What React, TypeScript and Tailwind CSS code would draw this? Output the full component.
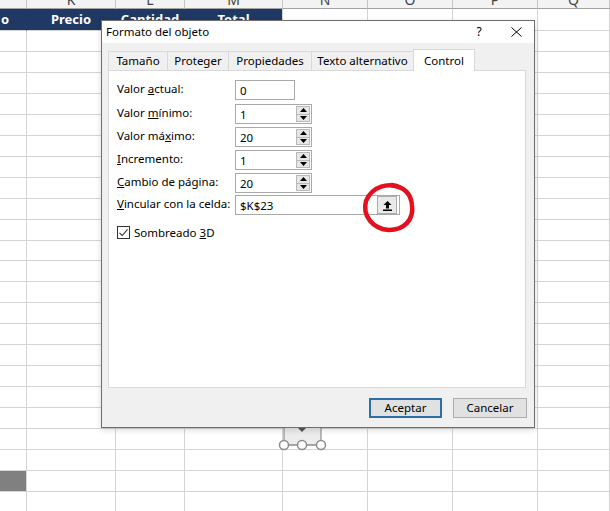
import React from 'react'

const COLS = 'grid grid-cols-[27px_89px_69px_98px_85px_85px_85px_72px]'
const letters = ['', 'K', 'L', 'M', 'N', 'O', 'P', 'Q']
const heads = ['o', 'Precio', 'Cantidad', 'Total']

function Sheet() {
  const rows = Array.from({ length: 23 }, (_, i) => i)
  return (
    <div className="font-['Noto_Sans',sans-serif]">
      {/* column letters */}
      <div className={COLS + ' bg-[#f3f3f3]'}>
        {letters.map((l, i) => (
          <div
            key={i}
            className="h-[9px] border-r border-b border-r-[#c6c6c6] border-b-[#a3a3a3] flex items-end justify-center overflow-hidden"
          >
            <span className="text-[14px] leading-[14px] text-[#444] mb-[1px]">{l}</span>
          </div>
        ))}
      </div>

      {/* table header row */}
      <div className={COLS}>
        {letters.map((_, i) =>
          i < 4 ? (
            <div
              key={i}
              className={
                'h-[22px] bg-[#203864] border-b border-b-[#d4d4d4] flex items-center overflow-hidden text-white font-bold text-[13px] ' +
                (i === 0 ? 'justify-start pl-[1px] border-r border-r-[#203864]' : 'justify-center') +
                (i === 1 || i === 2 ? ' border-r border-r-[#203864]' : '') +
                (i === 3 ? ' border-r border-r-[#d4d4d4]' : '')
              }
            >
              {heads[i]}
            </div>
          ) : (
            <div key={i} className="h-[22px] border-r border-b border-[#d4d4d4]" />
          ),
        )}
      </div>

      {/* cells */}
      {rows.map((r) => (
        <div key={r} className={COLS}>
          {letters.map((_, c) => (
            <div
              key={c}
              className={
                (r === 10 ? 'h-[20px] ' : 'h-[21px] ') +
                'border-r border-b border-[#d4d4d4] ' +
                (r === 21 && c === 0 ? 'bg-[#808080]' : 'bg-white')
              }
            />
          ))}
        </div>
      ))}
    </div>
  )
}

function SpinArrows() {
  return (
    <div className="ml-auto mr-[1px] w-[14px] h-full flex flex-col py-[1px]">
      <div className="flex-1 bg-[#e6e6e6] border border-[#b9b9b9] flex items-center justify-center">
        <svg width="7" height="4" viewBox="0 0 7 4">
          <polygon points="0,4 3.5,0 7,4" fill="#000" />
        </svg>
      </div>
      <div className="flex-1 bg-[#e6e6e6] border border-t-0 border-[#b9b9b9] flex items-center justify-center">
        <svg width="7" height="4" viewBox="0 0 7 4">
          <polygon points="0,0 7,0 3.5,4" fill="#000" />
        </svg>
      </div>
    </div>
  )
}

const fields = [
  { label: <>Valor <u>a</u>ctual:</>, value: '0', spin: false, mt: 'mt-0' },
  { label: <>Valor <u>m</u>ínimo:</>, value: '1', spin: true, mt: 'mt-[4px]' },
  { label: <>Valor má<u>x</u>imo:</>, value: '20', spin: true, mt: 'mt-[3px]' },
  { label: <><u>I</u>ncremento:</>, value: '1', spin: true, mt: 'mt-[3px]' },
  { label: <><u>C</u>ambio de página:</>, value: '20', spin: true, mt: 'mt-[3px]' },
]

function Dialog() {
  const tabs = [
    { name: 'Tamaño', w: 'w-[59px]' },
    { name: 'Proteger', w: 'w-[61px]' },
    { name: 'Propiedades', w: 'w-[83px]' },
    { name: 'Texto alternativo', w: 'w-[102px]' },
  ]
  return (
    <div className="absolute left-[101px] top-[20px] w-[434px] h-[408px] border border-[#6f6f6f] bg-[#f0f0f0] flex flex-col text-[11.5px] text-black font-['Noto_Sans',sans-serif] shadow-[0_2px_6px_rgba(0,0,0,0.15)]">
      {/* title bar */}
      <div className="h-[22px] bg-white flex items-center pl-[4px] shrink-0">
        <span>Formato del objeto</span>
        <span className="ml-auto w-[20px] text-center text-[12px]">?</span>
        <span className="ml-[17px] w-[20px] flex justify-center">
          <svg width="11" height="10" viewBox="0 0 11 10">
            <path d="M0.5 0.5 L10.5 9.5 M10.5 0.5 L0.5 9.5" stroke="#000" strokeWidth="1" />
          </svg>
        </span>
        <span className="w-[8px]" />
      </div>

      <div className="px-[6px] pt-[6px]">
        {/* tabs */}
        <div className="flex items-end h-[21px]">
          {tabs.map((t) => (
            <div
              key={t.name}
              className={t.w + ' h-[19px] border-t border-l border-[#d9d9d9] flex items-center justify-center'}
            >
              {t.name}
            </div>
          ))}
          <div className="w-[62px] h-[22px] mb-[-1px] relative z-10 bg-white border-t border-l border-r border-[#d9d9d9] flex items-center justify-center pt-[1px]">
            Control
          </div>
        </div>

        {/* panel */}
        <div className="w-[418px] h-[318px] border border-[#d9d9d9] bg-white pl-[8px] pt-[9px] flex flex-col">
          {fields.map((f, i) => (
            <div key={i} className={f.mt + ' flex items-center h-[20px]'}>
              <div className="w-[118px] pb-[3px]">{f.label}</div>
              <div
                className={
                  (f.spin ? 'w-[77px]' : 'w-[60px]') +
                  ' h-[20px] border border-[#a9a9a9] bg-white flex items-center pl-[4px]'
                }
              >
                <span className="pt-[1px]">{f.value}</span>
                {f.spin && <SpinArrows />}
              </div>
            </div>
          ))}

          <div className="mt-[2px] flex items-center h-[20px]">
            <div className="w-[118px] pb-[3px]">
              <u>V</u>incular con la celda:
            </div>
            <div className="w-[165px] h-[20px] border border-[#a9a9a9] bg-white flex items-center pl-[4px]">
              <span className="pt-[1px]">$K$23</span>
              <div className="ml-auto mr-[2px] w-[20px] h-[18px] border border-[#adadad] bg-[#e9e9e9] flex items-center justify-center">
                <svg width="9" height="11" viewBox="0 0 9 11">
                  <polygon points="0.5,5 4.5,1 8.5,5" fill="#000" />
                  <rect x="3" y="4.5" width="3" height="4" fill="#000" />
                  <rect x="0" y="9.5" width="9" height="1.5" fill="#000" />
                </svg>
              </div>
            </div>
          </div>

          <div className="mt-[9px] flex items-center">
            <div className="w-[13px] h-[13px] border border-[#333] bg-white flex items-center justify-center">
              <svg width="11" height="11" viewBox="0 0 11 11">
                <polyline points="1.5,5.8 4.2,8.5 9.5,2.3" fill="none" stroke="#333" strokeWidth="1.1" />
              </svg>
            </div>
            <span className="ml-[4px]">
              Sombreado <u>3</u>D
            </span>
          </div>
        </div>

        {/* buttons */}
        <div className="mt-[10px] flex justify-end gap-[11px] pr-[1px]">
          <button className="w-[73px] h-[20px] border-2 border-[#2f6fa7] bg-[#e1e1e1] flex items-center justify-center">
            Aceptar
          </button>
          <button className="w-[74px] h-[20px] border border-[#adadad] bg-[#e1e1e1] flex items-center justify-center">
            Cancelar
          </button>
        </div>
      </div>
    </div>
  )
}

export default function App() {
  return (
    <div className="relative w-[610px] h-[511px] overflow-hidden bg-white">
      <Sheet />

      {/* selected spinner control peeking under the dialog */}
      <svg className="absolute left-[278px] top-[426px]" width="50" height="26" viewBox="0 0 50 26">
        <rect x="6" y="0" width="37" height="19" fill="#ececec" />
        <line x1="6" y1="0" x2="6" y2="15" stroke="#7f7f7f" strokeWidth="1" />
        <line x1="43" y1="0" x2="43" y2="15" stroke="#7f7f7f" strokeWidth="1" />
        <polygon points="20,2 28,2 24,6" fill="#555" />
        <line x1="6" y1="19" x2="43" y2="19" stroke="#8c8c8c" strokeWidth="1.5" />
        <circle cx="6" cy="19" r="4.5" fill="#fff" stroke="#8c8c8c" strokeWidth="1.5" />
        <circle cx="24" cy="19" r="4.5" fill="#fff" stroke="#8c8c8c" strokeWidth="1.5" />
        <circle cx="43" cy="19" r="4.5" fill="#fff" stroke="#8c8c8c" strokeWidth="1.5" />
      </svg>

      <Dialog />

      {/* red hand-drawn circle */}
      <svg className="absolute left-[360px] top-[180px]" width="60" height="55" viewBox="0 0 60 55">
        <path
          d="M41 8 C29 2, 12 6, 6 21 C2 36, 13 49, 29 50 C44 50, 54 40, 52 25 C51 14, 44 7, 32 5"
          fill="none"
          stroke="#e3101d"
          strokeWidth="4.5"
          strokeLinecap="round"
        />
      </svg>
    </div>
  )
}
